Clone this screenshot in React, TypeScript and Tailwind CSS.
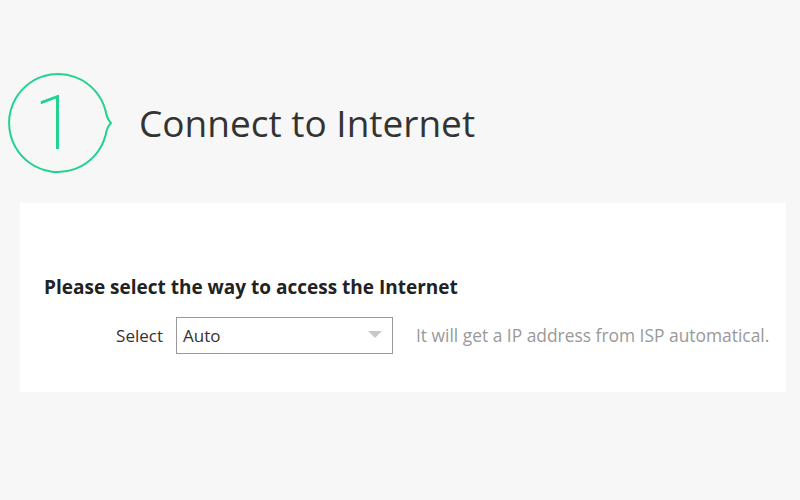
import React from "react";

const StepBadge = ({ num }: { num: number }) => (
  <div className="relative w-[110px] h-[104px] shrink-0">
    <svg width="110" height="104" viewBox="0 0 110 104" className="absolute inset-0">
      <path
        d="M 102.6 40 A 49 49 0 1 0 102.6 64 Q 104 56 108 52 Q 104 48 102.6 40 Z"
        fill="none"
        stroke="#22d38f"
        strokeWidth="2"
        strokeLinejoin="round"
      />
    </svg>
    <div className="absolute left-[3px] top-0 w-[98px] h-[104px] flex items-center justify-center text-[76px] font-extralight leading-none text-[#22d38f] font-['Roboto',sans-serif]">
      {num}
    </div>
  </div>
);

const App = () => {
  return (
    <div className="w-[800px] h-[500px] bg-[#f7f7f7] font-['Open_Sans','Noto_Sans',sans-serif] text-[#333]">
      <div className="pt-[71px] pl-[3px] flex items-center gap-[26px]">
        <StepBadge num={1} />
        <h1 className="text-[37px] leading-none text-[#333] -mt-[2px]">Connect to Internet</h1>
      </div>

      <div className="mt-[28px] ml-[20px] w-[766px] h-[189px] bg-white pt-[72px] pl-[24px]">
        <div className="text-[19px] font-bold text-[#222] leading-[24px]">
          Please select the way to access the Internet
        </div>
        <div className="mt-[18px] flex items-center">
          <label className="w-[132px] text-right pr-[13px] text-[17px] text-[#333]">Select</label>
          <div className="relative w-[217px] h-[37px] border border-[#999] bg-white flex items-center px-[6px] text-[17px] text-[#333]">
            Auto
            <span className="absolute right-[10px] top-[13px] w-0 h-0 border-l-[7px] border-r-[7px] border-t-[7px] border-l-transparent border-r-transparent border-t-[#c8c8c8]" />
          </div>
          <span className="ml-[23px] text-[17.4px] text-[#999]">It will get a IP address from ISP automatical.</span>
        </div>
      </div>
    </div>
  );
};

export default App;
